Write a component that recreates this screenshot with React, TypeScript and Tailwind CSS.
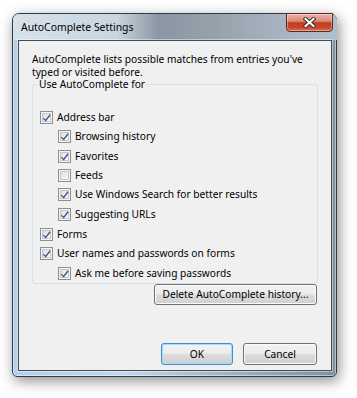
import React from "react";

type Row = { label: string; checked: boolean; indent?: boolean; h: string };

const rows: Row[] = [
  { label: "Address bar", checked: true, h: "h-[20px]" },
  { label: "Browsing history", checked: true, indent: true, h: "h-[19px]" },
  { label: "Favorites", checked: true, indent: true, h: "h-[20px]" },
  { label: "Feeds", checked: false, indent: true, h: "h-[19px]" },
  { label: "Use Windows Search for better results", checked: true, indent: true, h: "h-[19px]" },
  { label: "Suggesting URLs", checked: true, indent: true, h: "h-[20px]" },
  { label: "Forms", checked: true, h: "h-[20px]" },
  { label: "User names and passwords on forms", checked: true, h: "h-[19px]" },
  { label: "Ask me before saving passwords", checked: true, indent: true, h: "h-[20px]" },
];

const CheckBox: React.FC<{ checked: boolean }> = ({ checked }) => (
  <div className="w-[13px] h-[13px] shrink-0 border border-[#8e8f8f] bg-[#f4f4f4] p-px">
    <div className="w-full h-full border border-[#c5c8cc] bg-[linear-gradient(135deg,#d9dcdf_0%,#f3f4f5_70%,#fdfdfd_100%)] relative">
      {checked && (
        <svg width="11" height="11" viewBox="0 0 11 11" className="absolute -left-[2px] -top-[2px]">
          <path d="M2.2 5.4 L4.6 7.6 L8.6 2.2 L9.6 3.2 L4.8 9.6 L2.2 6.9 Z" fill="#3e5289" />
        </svg>
      )}
    </div>
  </div>
);

const WinButton: React.FC<{ label: string; primary?: boolean; className?: string }> = ({
  label,
  primary,
  className,
}) => (
  <button
    type="button"
    className={
      "rounded-[3px] border text-[10.2px] leading-none text-black whitespace-nowrap flex items-center justify-center bg-[linear-gradient(180deg,#f3f3f3_0%,#ebebeb_48%,#dddddd_52%,#cfcfcf_100%)] " +
      (primary
        ? "border-[#3c8fd0] shadow-[inset_0_0_0_1px_#a6dcf7] "
        : "border-[#707070] shadow-[inset_0_0_0_1px_#fbfbfb] ") +
      (className ?? "")
    }
  >
    {label}
  </button>
);

const App: React.FC = () => {
  return (
    <div
      className="w-[357px] min-h-[398px] bg-white pl-[12px] pt-[13px]"
      style={{ fontFamily: '"Noto Sans", "Open Sans", sans-serif' }}
    >
      <div className="w-[325px] h-[364px] rounded-t-[7px] rounded-b-[5px] border border-[#2e3a44] bg-[linear-gradient(90deg,#b4cfeb_0%,#c3d6e8_35%,#a3b5c3_65%,#7e919f_100%)] shadow-[2px_4px_14px_rgba(0,0,0,0.45),inset_0_0_0_1px_rgba(255,255,255,0.45)] flex flex-col pl-[5px] pr-[4px] pb-[5px]">
        {/* title bar */}
        <div className="h-[26px] -mx-[5px] pl-[8px] pr-[4px] rounded-t-[6px] flex items-start justify-between bg-[linear-gradient(90deg,#d6e1ea_0%,#c9d5df_32%,#8a97a2_45%,#95a2ac_62%,#a5b2bd_80%,#b2c0cb_100%)]">
          <span className="text-[10.4px] leading-none text-black mt-[8px] whitespace-nowrap">AutoComplete Settings</span>
          <div className="w-[47px] h-[19px] -mt-px rounded-b-[4px] border border-[#5a2a22] bg-[linear-gradient(180deg,#eab4a8_0%,#d98a76_42%,#c33c22_52%,#c9472c_80%,#dc7552_100%)] shadow-[inset_0_0_0_1px_rgba(255,255,255,0.35)] flex items-center justify-center">
            <svg width="13" height="11" viewBox="0 0 13 11">
              <path d="M2.5 2 L10.5 9 M10.5 2 L2.5 9" stroke="#3a3434" strokeWidth="4" strokeLinecap="square" />
              <path d="M2.5 2 L10.5 9 M10.5 2 L2.5 9" stroke="#ffffff" strokeWidth="2" strokeLinecap="square" />
            </svg>
          </div>
        </div>

        {/* client area */}
        <div className="flex-1 border border-[#3e4d58] bg-[#f0f0f0] shadow-[0_0_0_1px_rgba(255,255,255,0.45)] flex flex-col pl-[13px] pr-[13px] pt-[12px] pb-[5px] text-[10.2px] text-black">
          <p className="leading-[13px] whitespace-nowrap">
            AutoComplete lists possible matches from entries you've
            <br />
            typed or visited before.
          </p>

          <fieldset className="-mt-px border border-[#d5dfe5] rounded-[3px] pl-[5px]">
            <legend className="px-[1px] leading-[12px]">Use AutoComplete for</legend>
            <div className="pt-[17px] pl-[2px] flex flex-col">
              {rows.map((r) => (
                <div key={r.label} className={"flex items-center gap-[4px] " + r.h + (r.indent ? " pl-[18px]" : "")}>
                  <CheckBox checked={r.checked} />
                  <span className="leading-none whitespace-nowrap">{r.label}</span>
                </div>
              ))}
            </div>
          </fieldset>

          <div className="flex justify-end pr-[1px]">
            <WinButton label="Delete AutoComplete history..." className="w-[163px] h-[21px]" />
          </div>

          <div className="mt-auto flex justify-end gap-[10px] pr-[1px]">
            <WinButton label="OK" primary className="w-[72px] h-[22px]" />
            <WinButton label="Cancel" className="w-[74px] h-[22px]" />
          </div>
        </div>
      </div>
    </div>
  );
};

export default App;
